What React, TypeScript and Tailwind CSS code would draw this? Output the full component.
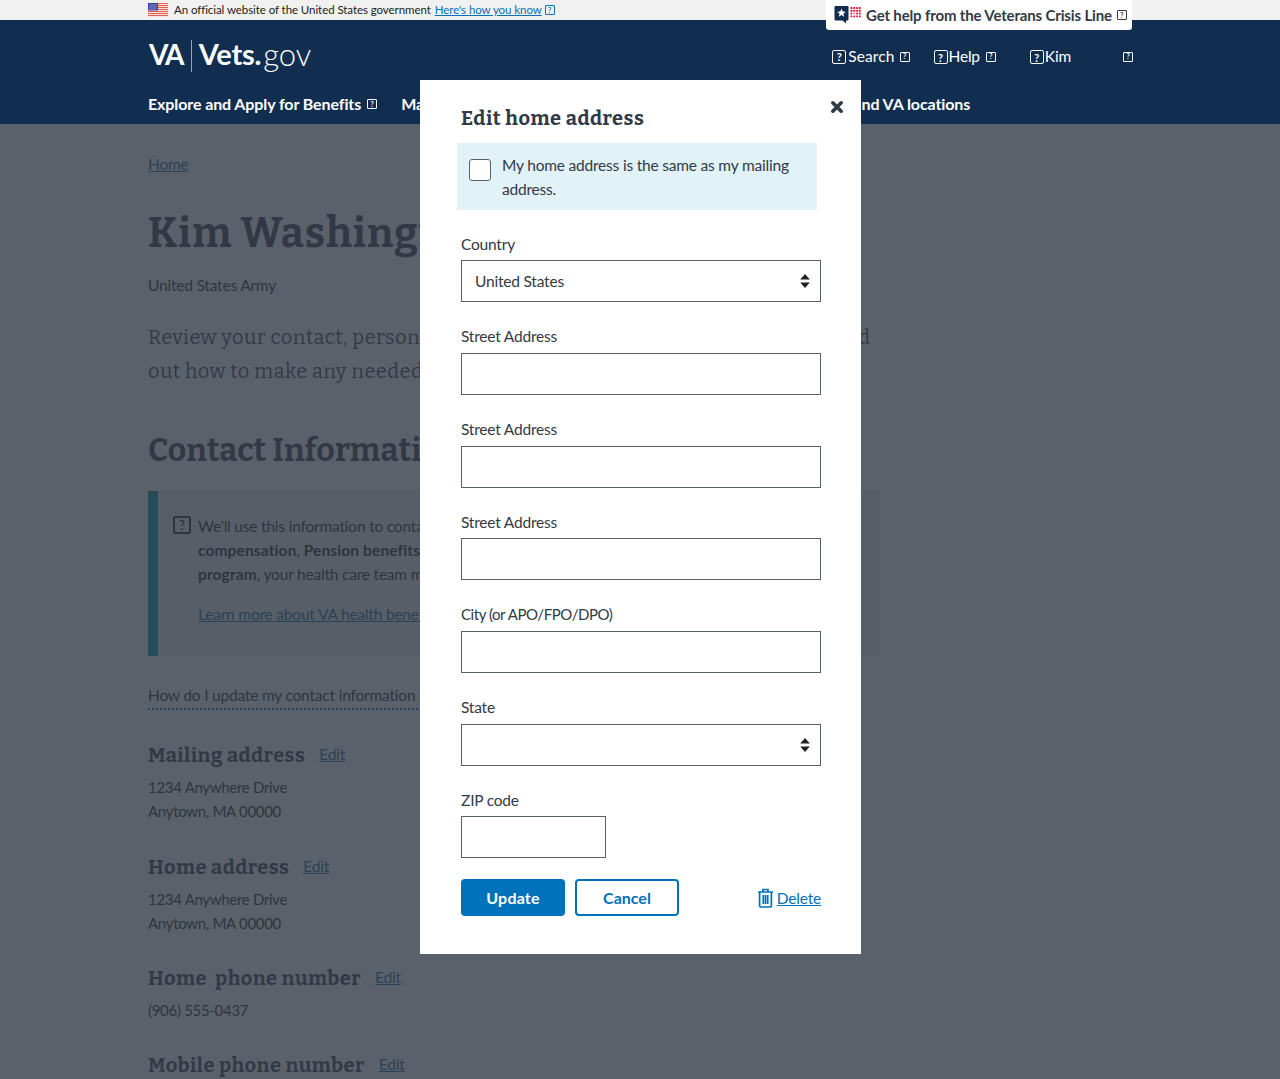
import React from "react";

const sans = "font-['Lato','Liberation_Sans',sans-serif]";
const slab = "font-['Bitter','DejaVu_Serif',serif]";
const body = "text-[15.5px] tracking-[-0.2px]";
const small = "text-[15px] tracking-[-0.3px]";

function Tofu({ cls = "" }: { cls?: string }) {
  return (
    <span className={`inline-flex shrink-0 items-center justify-center w-[10px] h-[10px] border border-current rounded-[1px] text-[7px] leading-none font-bold tracking-normal ${cls}`}>?</span>
  );
}
function BigTofu({ cls = "" }: { cls?: string }) {
  return (
    <span className={`inline-flex shrink-0 items-center justify-center w-[14px] h-[14px] border-[1.5px] border-current rounded-[2px] text-[11px] leading-none font-bold tracking-normal ${cls}`}>?</span>
  );
}

function Flag() {
  return (
    <svg width="20" height="14" viewBox="0 0 20 14" className="block shrink-0">
      <rect width="20" height="14" fill="#fff" />
      {[0, 2, 4, 6, 8, 10, 12].map((y) => (
        <rect key={y} y={y} width="20" height="1.2" fill="#e8614f" />
      ))}
      <rect width="10" height="7.5" fill="#3c3f9e" />
      {[1.5, 3.5, 5.5].map((y) =>
        [1.5, 3.5, 5.5, 7.5].map((x) => <rect key={`${x}${y}`} x={x} y={y} width="1" height="1" fill="#d8d8f0" />)
      )}
    </svg>
  );
}

function CrisisIcon() {
  return (
    <svg width="30" height="20" viewBox="0 0 30 20" className="block shrink-0">
      <path d="M1.5 1h12a1 1 0 0 1 1 1v12.5a1 1 0 0 1-1 1H12v3l-3.5-3H1.5a1 1 0 0 1-1-1V2a1 1 0 0 1 1-1z" fill="#112e51" />
      <path d="M7.5 3.6l1.2 2.9 3.1.2-2.4 2 .8 3-2.7-1.7-2.7 1.7.8-3-2.4-2 3.1-.2z" fill="#fff" />
      {[3, 5.8, 8.6, 11.4].map((y) =>
        [16.5, 19.3, 22.1, 24.9].map((x) => (
          <rect key={`${x}-${y}`} x={x} y={y - 1} width="1.9" height="1.9" rx="0.5" fill={y === 8.6 && x === 19.3 ? "#f3a8a0" : "#e31c3d"} />
        ))
      )}
    </svg>
  );
}

function Stepper() {
  return (
    <svg width="10" height="14" viewBox="0 0 10 14" className="block shrink-0">
      <path d="M5 0l4.8 5.6H.2z" fill="#212121" />
      <path d="M5 14L.2 8.4h9.6z" fill="#212121" />
    </svg>
  );
}

function Field({ label, select, narrow, tight }: { label: string; select?: string | boolean; narrow?: boolean; tight?: boolean }) {
  return (
    <div className="mb-[24.87px]">
      <div className={`${tight ? "text-[15px] tracking-[-0.45px]" : body} leading-[18.8px] text-[#323a45] mb-[7px]`}>{label}</div>
      <div className={`h-[42px] ${narrow ? "w-[145px]" : "w-[360px]"} border border-[#5b616b] bg-white flex items-center justify-between pl-[13px] pr-[10px]`}>
        <span className={`${body} text-[#323a45]`}>{typeof select === "string" ? select : ""}</span>
        {select !== undefined && <Stepper />}
      </div>
    </div>
  );
}

function Entry({ title, lines, gap = "" }: { title: string; lines: string[]; gap?: string }) {
  return (
    <div className={gap}>
      <div className="flex items-center gap-[14px]">
        <h3 className={`${slab} font-bold text-[20px] leading-[24px] tracking-[0.45px] text-[#323a45] whitespace-pre`}>{title}</h3>
        <a className={`${body} underline text-[#005f9e]`}>Edit</a>
      </div>
      <div className={`mt-[8px] ${small} leading-[24px] text-[#212121]`}>
        {lines.map((l) => (
          <div key={l}>{l}</div>
        ))}
      </div>
    </div>
  );
}

export default function App() {
  return (
    <div className={`relative h-[1079px] w-full overflow-hidden bg-white ${sans}`}>
      <div className="h-5 bg-[#f1f1f1] pl-[148px] flex items-center text-[11.5px] tracking-[-0.07px] text-[#212121]">
        <Flag />
        <span className="ml-[6px]">An official website of the United States government</span>
        <a className="ml-[4px] underline text-[#0071bb]">Here's how you know</a>
        <Tofu cls="ml-[3px] text-[#0071bb]" />
      </div>

      <header className="relative h-[104px] bg-[#112e51] text-white">
        <div className="flex items-start pl-[149px] pr-[147px] pt-[18px]">
          <div className="flex items-center h-[32px]">
            <span className="text-[28px] font-bold tracking-[-1.8px]">VA</span>
            <span className="w-px h-[32px] mt-[4px] bg-[#9aa5b1] ml-[8px] mr-[7px]" />
            <span className="text-[29px] font-bold tracking-[-0.2px]">Vets.</span>
            <span className="text-[31px] font-light tracking-[-0.1px] ml-[2px]">gov</span>
          </div>
          <nav className={`ml-auto flex items-center h-[32px] pt-[5px] ${body}`}>
            <BigTofu /><span className="ml-[2px] tracking-[0.1px]">Search</span><Tofu cls="ml-[5px]" />
            <span className="ml-[24px]"><BigTofu /></span><span className="ml-[1px]">Help</span><Tofu cls="ml-[6px]" />
            <span className="ml-[34px]"><BigTofu /></span><span className="ml-[1px]">Kim</span><Tofu cls="ml-[52px]" />
          </nav>
        </div>
        <div className="flex items-center pl-[148px] mt-[22px] text-[16px] tracking-[-0.1px] font-bold">
          <span>Explore and Apply for Benefits</span>
          <Tofu cls="ml-[6px]" />
          <span className="ml-[24px]">Manage</span>
          <span className="ml-[391px] whitespace-nowrap">Find VA locations</span>
        </div>
      </header>

      <div className="absolute top-0 left-[826px] w-[306px] h-[30px] bg-white rounded-b-[3px] flex items-center pl-[8px] z-30 text-[#323a45]">
        <CrisisIcon />
        <span className="ml-[2px] text-[15px] tracking-[-0.15px] font-bold whitespace-nowrap">Get help from the Veterans Crisis Line</span>
        <Tofu cls="ml-[5px]" />
      </div>

      <main className="pl-[148px] text-[#212121]">
        <a className={`block mt-[29px] ${body} leading-[22px] underline text-[#005f9e]`}>Home</a>
        <h1 className={`${slab} mt-[31px] text-[41px] leading-[56px] font-bold tracking-[1px] text-[#323a45]`}>Kim Washington</h1>
        <div className={`mt-[11px] ${body} leading-[24px]`}>United States Army</div>
        <p className={`${slab} mt-[23px] text-[20px] leading-[34px] tracking-[0.45px] whitespace-nowrap text-[#323a45]`}>
          Review your contact, personal, and military service information — and find<br />out how to make any needed updates or corrections.
        </p>
        <h2 className={`${slab} mt-[40px] text-[32px] leading-[44px] font-bold tracking-[0.1px] text-[#323a45]`}>Contact Information</h2>
        <div className="mt-[19px] w-[732px] h-[165px] bg-[#f1f1f1] border-l-[10px] border-[#0090b0] pl-[15px] pt-[23px] flex">
          <BigTofu cls="mt-[2px] !w-[18px] !h-[18px] !border-2 !text-[13px] text-[#212121]" />
          <div className={`ml-[7px] w-[660px] ${body} leading-[24px]`}>
            <p>We'll use this information to contact you about certain benefits and services, including disability<br /><b className="tracking-[0.13px]">compensation</b>, <b className="tracking-[0.13px]">Pension benefits</b>, and the <b className="tracking-[0.13px]">Veterans Health Care</b><br /><b className="tracking-[0.13px]">program</b>, your health care team may also use it.</p>
            <a className="block mt-[16px] underline text-[#005f9e]">Learn more about VA health benefits</a>
          </div>
        </div>
        <div className={`mt-[27px] inline-block border-b-2 border-dotted border-[#005f9e] pb-px ${body} leading-[24px]`}>How do I update my contact information online?</div>
        <Entry gap="mt-[33px]" title="Mailing address" lines={["1234 Anywhere Drive", "Anytown, MA 00000"]} />
        <Entry gap="mt-[32px]" title="Home address" lines={["1234 Anywhere Drive", "Anytown, MA 00000"]} />
        <Entry gap="mt-[31px]" title="Home  phone number" lines={["(906) 555-0437"]} />
        <Entry gap="mt-[31px]" title="Mobile phone number" lines={["(906) 555-0437"]} />
      </main>

      <div className="absolute left-0 right-0 top-[124px] bottom-0 bg-[#323a45]/80 z-10" />

      <div role="dialog" className="absolute left-[420px] top-[80px] w-[441px] h-[874px] bg-white z-20 pl-[41px] pt-[26px]">
        <button className="absolute right-[17px] top-[20px] text-[#323a45]">
          <svg width="14" height="14" viewBox="0 0 14 14" className="block">
            <path d="M2.8 2.8l8.4 8.4M11.2 2.8l-8.4 8.4" stroke="#323a45" strokeWidth="3.6" strokeLinecap="round" />
          </svg>
        </button>
        <h3 className={`${slab} text-[20px] leading-[24px] font-bold tracking-[0.5px] text-[#323a45]`}>Edit home address</h3>
        <div className="-ml-[4px] mt-[13px] w-[360px] h-[67px] bg-[#e1f2f8] flex pl-[12px] pt-[10px]">
          <span className="mt-[6px] w-[22px] h-[22px] rounded-[3px] border border-[#5b616b] bg-white shrink-0" />
          <span className={`ml-[11px] w-[300px] ${body} leading-[24px] text-[#323a45]`}>My home address is the same as my mailing address.</span>
        </div>
        <div className="mt-[24.6px]">
          <Field label="Country" select="United States" />
          <Field label="Street Address" />
          <Field label="Street Address" />
          <Field label="Street Address" />
          <Field label="City (or APO/FPO/DPO)" tight />
          <Field label="State" select={true} />
          <Field label="ZIP code" narrow />
        </div>
        <div className="flex items-center w-[360px] -mt-[4px]">
          <button className="w-[104px] h-[37px] rounded-[4px] bg-[#0071bb] text-white font-bold text-[16px] tracking-[0.2px]">Update</button>
          <button className="ml-[10px] w-[104px] h-[37px] rounded-[4px] border-2 border-[#0071bb] text-[#0071bb] font-bold text-[16px]">Cancel</button>
          <a className={`ml-auto mt-[1px] flex items-center text-[#0071bb] ${body}`}>
            <svg width="17" height="20" viewBox="0 0 17 20" className="block mr-[3px]">
              <path d="M1 4h15M6 4V1.5h5V4M2.6 4v13.8a1.2 1.2 0 0 0 1.2 1.2h9.4a1.2 1.2 0 0 0 1.2-1.2V4M6.3 7v9M8.5 7v9M10.7 7v9" fill="none" stroke="#0071bb" strokeWidth="1.7" />
            </svg>
            <span className="underline">Delete</span>
          </a>
        </div>
      </div>
    </div>
  );
}
